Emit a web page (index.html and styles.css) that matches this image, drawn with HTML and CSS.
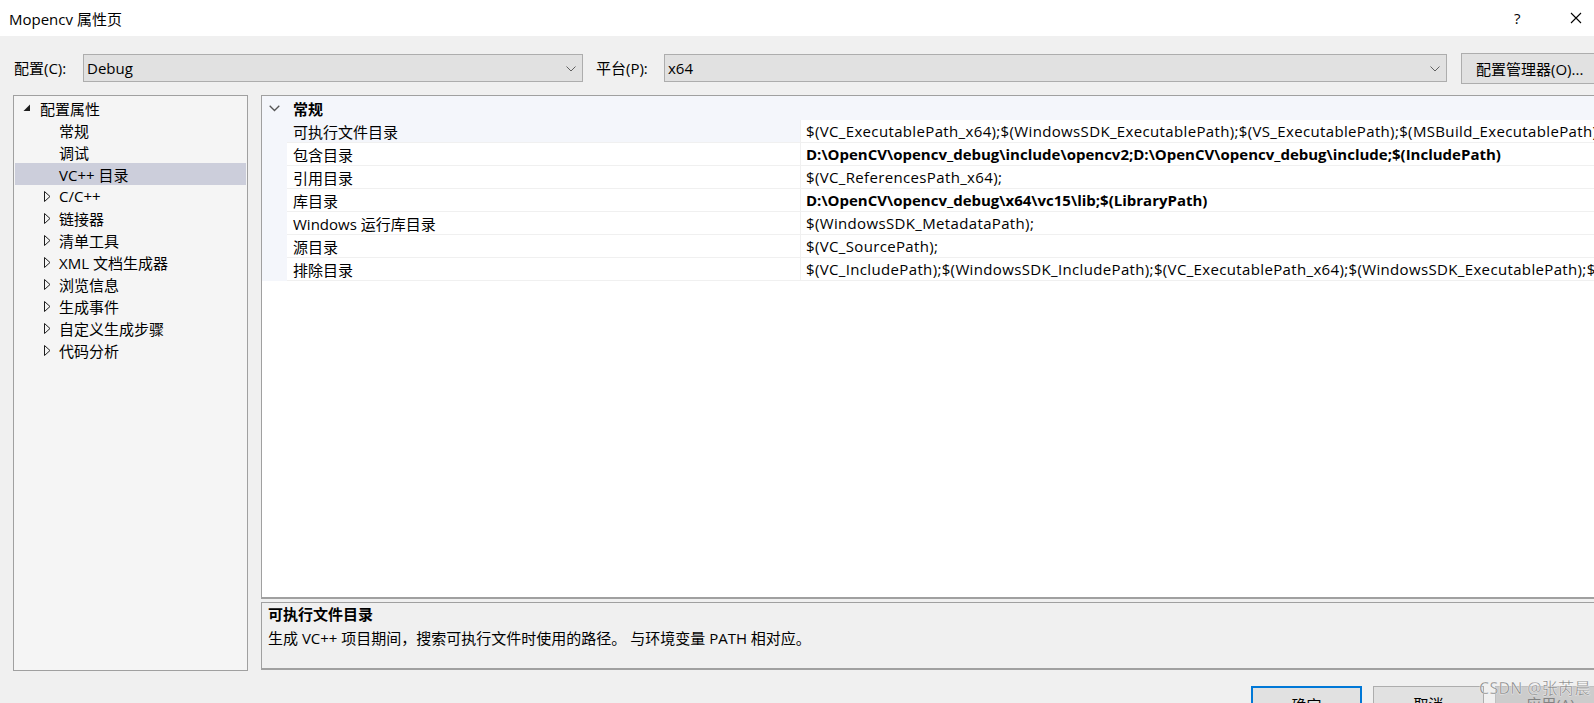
FILE: index.html
```html
<!DOCTYPE html>
<html lang="zh-CN">
<head>
<meta charset="utf-8">
<title>Mopencv 属性页</title>
<link rel="stylesheet" href="styles.css">
</head>
<body>
<div class="window">
  <div class="titlebar">
    <span class="title">Mopencv 属性页</span>
    <span class="help">?</span>
    <span class="close"><svg width="12" height="12" viewBox="0 0 12 12"><path d="M1 1L11 11M11 1L1 11" stroke="#000" stroke-width="1.1" fill="none"/></svg></span>
  </div>

  <div class="toolbar">
    <span class="lbl lbl-config">配置(C):</span>
    <div class="combo combo-config"><span>Debug</span><svg class="chev" width="10" height="6" viewBox="0 0 10 6"><path d="M0.5 0.5L5 5L9.5 0.5" stroke="#606060" fill="none"/></svg></div>
    <span class="lbl lbl-platform">平台(P):</span>
    <div class="combo combo-platform"><span>x64</span><svg class="chev" width="10" height="6" viewBox="0 0 10 6"><path d="M0.5 0.5L5 5L9.5 0.5" stroke="#606060" fill="none"/></svg></div>
    <div class="btn btn-manager">配置管理器(O)...</div>
  </div>

  <div class="main">
    <div class="tree">
      <div class="trow root"><svg class="exp" width="8" height="8" viewBox="0 0 8 8"><path d="M7 0.5V7H0.5Z" fill="#1e1e1e"/></svg><span>配置属性</span></div>
      <div class="trow child"><span>常规</span></div>
      <div class="trow child"><span>调试</span></div>
      <div class="trow child selected"><span>VC++ 目录</span></div>
      <div class="trow node"><svg class="col" width="7" height="11" viewBox="0 0 7 11"><path d="M0.5 0.5L6 5.5L0.5 10.5Z" stroke="#1e1e1e" fill="none"/></svg><span>C/C++</span></div>
      <div class="trow node"><svg class="col" width="7" height="11" viewBox="0 0 7 11"><path d="M0.5 0.5L6 5.5L0.5 10.5Z" stroke="#1e1e1e" fill="none"/></svg><span>链接器</span></div>
      <div class="trow node"><svg class="col" width="7" height="11" viewBox="0 0 7 11"><path d="M0.5 0.5L6 5.5L0.5 10.5Z" stroke="#1e1e1e" fill="none"/></svg><span>清单工具</span></div>
      <div class="trow node"><svg class="col" width="7" height="11" viewBox="0 0 7 11"><path d="M0.5 0.5L6 5.5L0.5 10.5Z" stroke="#1e1e1e" fill="none"/></svg><span>XML 文档生成器</span></div>
      <div class="trow node"><svg class="col" width="7" height="11" viewBox="0 0 7 11"><path d="M0.5 0.5L6 5.5L0.5 10.5Z" stroke="#1e1e1e" fill="none"/></svg><span>浏览信息</span></div>
      <div class="trow node"><svg class="col" width="7" height="11" viewBox="0 0 7 11"><path d="M0.5 0.5L6 5.5L0.5 10.5Z" stroke="#1e1e1e" fill="none"/></svg><span>生成事件</span></div>
      <div class="trow node"><svg class="col" width="7" height="11" viewBox="0 0 7 11"><path d="M0.5 0.5L6 5.5L0.5 10.5Z" stroke="#1e1e1e" fill="none"/></svg><span>自定义生成步骤</span></div>
      <div class="trow node"><svg class="col" width="7" height="11" viewBox="0 0 7 11"><path d="M0.5 0.5L6 5.5L0.5 10.5Z" stroke="#1e1e1e" fill="none"/></svg><span>代码分析</span></div>
    </div>

    <div class="right">
      <div class="grid">
        <div class="cat"><svg class="catchev" width="11" height="7" viewBox="0 0 11 7"><path d="M0.7 0.7L5.5 5.5L10.3 0.7" stroke="#555" stroke-width="1.3" fill="none"/></svg><span>常规</span></div>
        <div class="prow sel"><div class="gut"></div><div class="name">可执行文件目录</div><div class="val">$(VC_ExecutablePath_x64);$(WindowsSDK_ExecutablePath);$(VS_ExecutablePath);$(MSBuild_ExecutablePath);$(FxCopDir);$(PATH);</div></div>
        <div class="prow"><div class="gut"></div><div class="name">包含目录</div><div class="val bold">D:\OpenCV\opencv_debug\include\opencv2;D:\OpenCV\opencv_debug\include;$(IncludePath)</div></div>
        <div class="prow"><div class="gut"></div><div class="name">引用目录</div><div class="val">$(VC_ReferencesPath_x64);</div></div>
        <div class="prow"><div class="gut"></div><div class="name">库目录</div><div class="val bold">D:\OpenCV\opencv_debug\x64\vc15\lib;$(LibraryPath)</div></div>
        <div class="prow"><div class="gut"></div><div class="name">Windows 运行库目录</div><div class="val">$(WindowsSDK_MetadataPath);</div></div>
        <div class="prow"><div class="gut"></div><div class="name">源目录</div><div class="val">$(VC_SourcePath);</div></div>
        <div class="prow"><div class="gut"></div><div class="name">排除目录</div><div class="val">$(VC_IncludePath);$(WindowsSDK_IncludePath);$(VC_ExecutablePath_x64);$(WindowsSDK_ExecutablePath);$(MSBuild_ExecutablePath);</div></div>
      </div>
      <div class="desc">
        <div class="desc-title">可执行文件目录</div>
        <div class="desc-text">生成 VC++ 项目期间，搜索可执行文件时使用的路径。 与环境变量 PATH 相对应。</div>
      </div>
    </div>
  </div>

  <div class="footer">
    <div class="btn fbtn ok">确定</div>
    <div class="btn fbtn">取消</div>
    <div class="btn fbtn disabled">应用(A)</div>
    <div class="watermark">CSDN @张芮晨</div>
  </div>
</div>
</body>
</html>
```

FILE: styles.css
```css
* { box-sizing: border-box; }
html, body {
  margin: 0;
  padding: 0;
  width: 1594px;
  height: 703px;
  overflow: hidden;
  background: #f0f0f0;
}
body {
  font-family: "Open Sans", "Noto Sans CJK SC", sans-serif;
  font-size: 15px;
  color: #000;
}
.window {
  position: relative;
  width: 1594px;
  height: 703px;
  overflow: hidden;
}
.titlebar {
  height: 36px;
  background: #fff;
  display: flex;
  align-items: center;
  padding-left: 9px;
}
.title { flex: 1; font-size: 15px; }
.help { font-size: 15px; width: 56px; flex-shrink: 0; }
.close { width: 16px; display: flex; margin-right: 8px; flex-shrink: 0; }

.toolbar {
  height: 59px;
  display: flex;
  align-items: flex-start;
  padding-top: 18px;
  overflow: hidden;
}
.toolbar > * { flex-shrink: 0; }
.lbl { line-height: 28px; }
.lbl-config { margin-left: 14px; width: 69px; }
.lbl-platform { margin-left: 13px; width: 68px; }
.combo {
  height: 28px;
  border: 1px solid #adadad;
  background: #e1e1e1;
  display: flex;
  align-items: center;
  padding-left: 3px;
  position: relative;
}
.combo .chev { position: absolute; right: 6px; top: 11px; }
.combo-config { width: 500px; }
.combo-platform { width: 783px; }
.btn {
  border: 1px solid #adadad;
  background: #e1e1e1;
  display: flex;
  align-items: center;
  justify-content: center;
}
.btn-manager {
  margin-left: 14px;
  margin-top: -1px;
  height: 31px;
  width: 144px;
  justify-content: flex-start;
  padding-left: 14px;
}

.main {
  display: flex;
  height: 576px;
  padding-left: 13px;
}
.tree {
  width: 235px;
  height: 576px;
  border: 1px solid #a0a0a0;
  background: #f5f5f5;
  padding: 1px 1px 0 1px;
  flex-shrink: 0;
}
.trow {
  height: 22px;
  display: flex;
  align-items: center;
  position: relative;
  white-space: nowrap;
}
.trow.root { padding-left: 8px; }
.trow.root .exp { margin-right: 9px; margin-top: -1px; }
.trow.child { padding-left: 44px; }
.trow.node { padding-left: 29px; }
.trow.node .col { margin-right: 8px; }
.trow.selected { background: #cccedb; }

.right {
  margin-left: 13px;
  width: 1345px;
  flex-shrink: 0;
  display: flex;
  flex-direction: column;
}
.grid {
  height: 504px;
  border: 1px solid #a0a0a0;
  border-bottom-width: 2px;
  background: #fff;
  overflow: hidden;
}
.cat {
  height: 24px;
  background: #f4f6fb;
  display: flex;
  align-items: center;
  font-weight: bold;
  padding-left: 7px;
  white-space: nowrap;
}
.catchev { margin-right: 13px; }
.prow {
  height: 23px;
  display: flex;
  white-space: nowrap;
}
.gut { width: 25px; background: #f4f6fb; flex-shrink: 0; }
.name {
  width: 513px;
  flex-shrink: 0;
  padding-left: 6px;
  border-bottom: 1px solid #f0f0f0;
  display: flex;
  align-items: center;
}
.prow.sel .name { background: #f4f6fb; }
.val {
  flex: 1;
  padding-left: 5px;
  border-left: 1px solid #f0f0f0;
  border-bottom: 1px solid #f0f0f0;
  display: flex;
  align-items: center;
  overflow: hidden;
  letter-spacing: 0.35px;
}
.val.bold { font-weight: bold; letter-spacing: 0; }

.desc {
  margin-top: 3px;
  height: 68px;
  border: 1px solid #a0a0a0;
  border-bottom-width: 2px;
  background: #f0f0f0;
  padding: 0 6px;
}
.desc-title { font-weight: bold; height: 23px; line-height: 23px; }
.desc-text { height: 24px; line-height: 24px; }

.footer {
  display: flex;
  padding-top: 15px;
  padding-left: 1251px;
  gap: 11px;
}
.fbtn {
  width: 111px;
  height: 28px;
  flex-shrink: 0;
  padding-top: 6px;
  align-items: flex-start;
}
.fbtn.ok { border: 2px solid #0078d7; }
.fbtn.disabled { background: #cccccc; border-color: #bfbfbf; color: #838383; }
.watermark {
  position: absolute;
  left: 1479px;
  top: 675px;
  font-size: 16px;
  letter-spacing: 0.3px;
  color: rgba(85, 85, 85, 0.7);
  -webkit-text-stroke: 0.3px rgba(255,255,255,0.8);
  text-shadow: 0 0 1px #fff;
  white-space: nowrap;
}
```
